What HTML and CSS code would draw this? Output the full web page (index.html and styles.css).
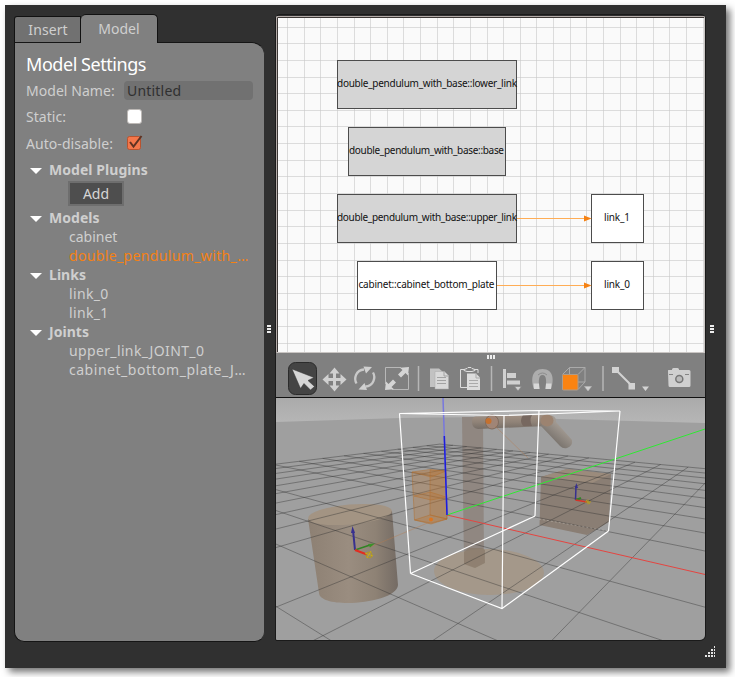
FILE: index.html
```
<!DOCTYPE html>
<html lang="en">
<head>
<meta charset="utf-8">
<title>Model Editor</title>
<link rel="stylesheet" href="styles.css">
</head>
<body>
<div class="window">
  <aside class="sidebar">
    <div class="tabs"><div class="tab tab-insert"><span>Insert</span></div><div class="tab tab-model"><span>Model</span></div></div>
    <div class="panel">
      <h1><span>Model Settings</span></h1>
      <div class="field"><label>Model Name:</label><div class="input">Untitled</div></div>
      <div class="field"><label>Static:</label><div class="check"></div></div>
      <div class="field"><label>Auto-disable:</label>
        <svg class="checked" width="18" height="16" viewBox="0 0 18 16"><rect x="1.5" y="1.5" width="13" height="13" rx="2" fill="#f4774b" stroke="#b9532f"/><path d="M4 7l3.5 4.5L15.500 1" fill="none" stroke="#5f3222" stroke-width="2"/></svg>
      </div>
      <div class="group plugins"><i></i><b>Model Plugins</b></div>
      <button class="add">Add</button>
      <div class="group"><i></i><b>Models</b></div>
      <div class="item short">cabinet</div>
      <div class="item selected">double_pendulum_with_…</div>
      <div class="group"><i></i><b>Links</b></div>
      <div class="item">link_0</div>
      <div class="item">link_1</div>
      <div class="group"><i></i><b>Joints</b></div>
      <div class="item">upper_link_JOINT_0</div>
      <div class="item long">cabinet_bottom_plate_J…</div>
    </div>
  </aside>
  <div class="splitter"><i></i><i></i><i></i></div>
  <main class="main">
    <svg class="diagram" width="430" height="337" viewBox="276 16 430 337">
      <rect x="276" y="16" width="430" height="337" fill="#fafafa"/>
      <g id="paper" fill="#c8c8c8" fill-opacity=".6"></g>
      <path d="M276.500 353V16.500H705" fill="none" stroke="#b3aba8"/>
      <path d="M277.500 353V17.500H705" fill="none" stroke="#3c3836"/>
      <path d="M704.500 17V353M277 352.500H705" fill="none" stroke="#c9c5c3"/>
      <path d="M705.500 17V353" stroke="#77726f"/>
      <g fill="#d5d5d5" stroke="#4c4c4c">
        <rect x="337.500" y="60.500" width="179" height="48"/>
        <rect x="348.500" y="127.500" width="157" height="48"/>
        <rect x="337.500" y="194.500" width="179" height="48"/>
      </g>
      <g fill="#fff" stroke="#4c4c4c">
        <rect x="357.500" y="261.500" width="139" height="48"/>
        <rect x="591.500" y="194.500" width="52" height="48"/>
        <rect x="591.500" y="261.500" width="52" height="48"/>
      </g>
      <path d="M517 218.500H585M497 285.500H585" stroke="#ffad55"/>
      <path d="M584 215.500l7.500 3-7.500 3zM584 282.500l7.500 3-7.500 3z" fill="#f58113"/>
      <g class="labels">
        <text x="337" y="87" textLength="180">double_pendulum_with_base::lower_link</text>
        <text x="349" y="154" textLength="155">double_pendulum_with_base::base</text>
        <text x="337" y="221" textLength="180">double_pendulum_with_base::upper_link</text>
        <text x="358.500" y="288" textLength="136">cabinet::cabinet_bottom_plate</text>
        <text x="604" y="221" textLength="26">link_1</text>
        <text x="604" y="288" textLength="26">link_0</text>
      </g>
    </svg>
    <div class="toolbar">
      <svg width="44" height="44" viewBox="0 0 44 44"><rect x="12.500" y="9.500" width="28" height="32" rx="7" fill="#444" stroke="#2b2b2b"/><path d="M16 16L38 24.500l-6 3 6.500 6-4 3.500-6.500-6.500-3.500 5z" fill="#d6d6d6" stroke="#333" stroke-width=".5"/></svg>
      <svg width="30" height="44" viewBox="44 0 30 44"><path d="M58.500 14.500l5 6h-3.500v4.500h4.500v-4l6 5.500-6 5.500v-4H60v4.500h3.500l-5 6-5-6H57v-4.500h-4.500v4l-6-5.500 6-5.500v4H57v-4.500h-3.500z" fill="#d0d0d0"/></svg>
      <svg width="31" height="44" viewBox="74 0 31 44"><g fill="none" stroke="#c9c9c9" stroke-width="2.300"><path d="M80.500 30.500c-3-5-.5-13.500 7.500-14"/><path d="M97 19.500c3 5 .5 13.500-7.500 14"/></g><path d="M87.500 13.500l8.500.500-6 6.500zM91 37l-8.500-.5 6-6.500z" fill="#d0d0d0"/></svg>
      <svg width="33" height="44" viewBox="105 0 33 44"><path d="M125 14.500H109.500V31M132.500 20V36.500H116" fill="none" stroke="#b8b8b8"/><path d="M133 14l-1 8.500-2.500-2.500-4.500 4.500-3-3 4.500-4.500-2.500-2.200zM109 37l1-8.500 2.500 2.500 4.500-4.500 3 3-4.500 4.500 2.500 2.200z" fill="#d5d5d5"/></svg>
      <svg width="12" height="44" viewBox="138 0 12 44"><path d="M142.500 13V38" stroke="#b6b6b6" stroke-width="1.500"/></svg>
      <svg width="30" height="44" viewBox="150 0 30 44"><path d="M154 15.500h9l4 3.500v15h-13z" fill="#c2c2c2"/><path d="M159 18.500h9.500l4 4V36H159z" fill="#d9d9d9" stroke="#aaa" stroke-width=".5"/><path d="M168 18.500v4.500h4.500M161 24.500h9M161 27.500h9M161 30.500h9" fill="none" stroke="#a3a3a3"/></svg>
      <svg width="31" height="44" viewBox="180 0 31 44"><path d="M191 34.500H184.500V16.500H202V20" fill="none" stroke="#ddd"/><path d="M188 17.500v-1l3-1 1-1h3l1 1 3 1v1l-3 1h-5z" fill="#808080" stroke="#e0e0e0"/><path d="M191 20.500h9l4 4V37h-13z" fill="#dcdcdc"/><path d="M200 20.500v4.500h4M193 27.500h9M193 30.500h9M193 33.500h9" fill="none" stroke="#aaa"/></svg>
      <svg width="10" height="44" viewBox="211 0 10 44"><path d="M215.500 13V38" stroke="#b6b6b6" stroke-width="1.500"/></svg>
      <svg width="31" height="44" viewBox="221 0 31 44"><path d="M227 16h3v19h-3zM231 20h9v5h-9zM231 27.500h13v4H231z" fill="#d0d0d0"/><path d="M238.500 33.500h7l-3.500 4.500z" fill="#d0d0d0" stroke="#808080" stroke-width=".6"/></svg>
      <svg width="30" height="44" viewBox="252 0 30 44"><path d="M258 36c-3-8-3-20 8.500-20S278 28 275 36h-5.500c1-6 1.500-14-3-14s-4 8-3 14z" fill="#adadad"/><path d="M257.500 30.500h5.500l.5 5.500H258zM270 30.500h5.500L275 36h-5.500z" fill="#d8d8d8"/><path d="M262 22q4.500-4 9 0" fill="none" stroke="#8c8c8c"/></svg>
      <svg width="40" height="44" viewBox="282 0 40 44"><path d="M286.500 21.500l7-7h15.500V29l-7 7.500M302 21.500l7-7M293.500 14.500V29H309M286.500 36.500l7-7.500" fill="none" stroke="#aaa"/><rect x="286.500" y="21.500" width="15.500" height="15.500" rx="1" fill="#fa8312" stroke="#ad9c8b"/><path d="M308.500 33.500h7l-3.500 4.500z" fill="#d0d0d0" stroke="#bbb" stroke-width=".5"/></svg>
      <svg width="10" height="44" viewBox="322 0 10 44"><path d="M327 13V38" stroke="#b6b6b6" stroke-width="1.500"/></svg>
      <svg width="42" height="44" viewBox="332 0 42 44"><path d="M340 17l16 16" stroke="#d3d3d3" stroke-width="2"/><path d="M336 14h7v6h-7zM352.500 30h6.500v6.500h-6.500zM366 33.500h7l-3.500 4.500z" fill="#d3d3d3"/></svg>
      <svg width="50" height="44" viewBox="374 0 50 44"><path d="M392 19v-1.500q0-.5.500-.5h3.500v-.5q0-1.500 1.500-1.500h4q1.500 0 1.500 1.500v.5h10q1.500 0 1.500 1.500v14q0 1.500-1.500 1.500h-19q-1.500 0-1.500-1.500z" fill="#d0d0d0"/><path d="M393 21.500h4M409 21.500h4" stroke="#858585"/><circle cx="403.300" cy="26" r="3.500" fill="#bbb" stroke="#777" stroke-width="1.500"/></svg>
      <div class="grip"><i></i><i></i><i></i></div>
    </div>
    <svg class="scene" width="430" height="243" viewBox="276 397 430 243">
      <defs>
        <linearGradient id="sky" x1="0" y1="0" x2="0" y2="1"><stop offset="0" stop-color="#aaa"/><stop offset="1" stop-color="#b6b6b6"/></linearGradient>
        <linearGradient id="drum"><stop offset="0" stop-color="#8d8073"/><stop offset=".45" stop-color="#9a8d80"/><stop offset=".75" stop-color="#8e8275"/><stop offset="1" stop-color="#746b64"/></linearGradient>
        <linearGradient id="arm" x1="0" y1="0" x2="0" y2="1"><stop offset="0" stop-color="#a19184"/><stop offset=".5" stop-color="#908378"/><stop offset="1" stop-color="#766e67"/></linearGradient>
        <linearGradient id="rod" gradientUnits="userSpaceOnUse" x1="561" y1="427" x2="551" y2="439"><stop offset="0" stop-color="#a19991"/><stop offset="1" stop-color="#7a746e"/></linearGradient>
      </defs>
      <rect x="276" y="397" width="430" height="243" fill="#9f9f9f"/>
      <path d="M276 397H706V423L560 419Q480 416 400 418L276 422z" fill="url(#sky)"/>
      <path d="M462 417H483L484 563 475 568 464 564z" fill="#8b7f77" fill-opacity=".75"/>
      <ellipse cx="489" cy="572" rx="55" ry="23" fill="#a59583" fill-opacity=".75" transform="rotate(1 489 572)"/>
      <path d="M464 552l5-4h13l3 2v13l-10 5-11-4z" fill="#887969" fill-opacity=".7"/>
      <path d="M541 477L567 469 611 474 609 522 587 535 539.500 525z" fill="#8a7e74"/>
      <path d="M541 477L567 469 611 474 592 483z" fill="#9b8b7c"/>
      <path d="M308 519L319 593C320 610 397 604 398 585L392 511z" fill="url(#drum)"/>
      <ellipse cx="350" cy="514.500" rx="42" ry="10" transform="rotate(-5 350 514.500)" fill="#a39483"/>
      <g id="floor" fill="none" stroke="#303030" stroke-opacity=".4"></g>
      <path d="M447 515L706 574.700" stroke="#e44541"/>
      <path d="M447 515L706 428.700" stroke="#2eea32"/>
      <path d="M539 519L608 531" stroke="#c4bdb6" stroke-opacity=".5" stroke-dasharray="2 2"/>
      <g fill="#b97431" fill-opacity=".3" stroke="#b46c29" stroke-opacity=".45">
        <path d="M412 472L430 469.500 446 471 447 519 431 523 414.500 520z"/>
        <path d="M430 470L446 471 447 519 430 515z"/>
        <path d="M414 496L430 492 446 497 431 500zM414.500 520L430 515 447 519 431 524zM412 472L431 477 446 471"/>
      </g>
      <circle cx="431" cy="519.500" r="2" fill="#dc741f"/>
      <path d="M443 398L447 515" stroke="#7878dd" stroke-width="1.500"/>
      <path d="M444.300 436L447 515" stroke="#1c1cdc" stroke-width="1.500"/>
      <path d="M477 416.500L545 415Q550 417 551 421T547 426L478 429Q472 428 472 422T477 416.500z" fill="url(#arm)"/>
      <path d="M547 415Q557 415 556 422L572 440Q573 446 567 448 563 449 560 446L541 426z" fill="url(#rod)"/>
      <ellipse cx="492" cy="422" rx="6.500" ry="7" fill="#a08576" stroke="#806b5d"/>
      <circle cx="488.500" cy="421" r="3" fill="#c5712f"/>
      <path d="M523 415h9q-3 5 0 11h-9q-4-5 0-11z" fill="#776860"/>
      <ellipse cx="547" cy="420.500" rx="6.500" ry="6" fill="#9c8370"/>
      <path d="M495 426L528 458M370 547L430 522" stroke="#b97b4b" stroke-opacity=".4"/>
      <g fill="none" stroke="#fff" stroke-width="1.200">
        <path d="M399.500 413.500L504 415.500 620 411 539 410.500zM410.500 573.500L502 608.500 608.500 531M410.500 573.500L535 516"/>
        <path d="M399.500 413.500L410.500 573.500M504 415.500L502 608.500M620 411L608.500 531M539 410.500L535 516"/>
      </g>
      <path d="M355 550L353 530" stroke="#37308f" stroke-width="2"/><path d="M352.500 526l2.500 7h-4z" fill="#37308f"/>
      <path d="M355 550L370 545" stroke="#318325" stroke-width="1.500"/><path d="M375 543.500l-5 4-2-3.500z" fill="#3c912a"/>
      <path d="M355 550L367 554.500" stroke="#e22c20" stroke-width="2"/><circle cx="369" cy="555" r="3" fill="none" stroke="#b3991e"/><path d="M365 553l8 3M371 551l-4 7" stroke="#c7ac17"/>
      <path d="M575.500 500L576 486" stroke="#37308f" stroke-width="1.500"/><path d="M576.300 483l1.700 5h-3z" fill="#37308f"/>
      <path d="M576 500L581 498" stroke="#318325" stroke-width="2"/><path d="M575.500 500L587 502" stroke="#d73227" stroke-width="1.500"/><path d="M585 502h6M588 499.500v5M586 500l4 4" stroke="#b49b20"/>
      <path d="M276 397.500H706" stroke="#111"/>
    </svg>
  </main>
  <div class="splitter right"><i></i><i></i><i></i></div>
  <svg class="sizegrip" width="11" height="12" viewBox="0 0 11 12" shape-rendering="crispEdges"><path d="M0 9h2v2H0zM3 9h2v2H3zM6 9h2v2H6zM9 9h1v2H9zM3 6h2v2H3zM6 6h2v2H6zM9 6h1v2H9zM6 3h2v2H6zM9 3h1v2H9zM9 0h1v2H9z" fill="#e4e4e4"/></svg>
</div>
<script src="app.js"></script>
</body>
</html>
```
FILE: styles.css
```
* { box-sizing: border-box; }
body { margin: 0; padding: 5px; height: 677px; background: #fff; overflow: hidden; font-family: "Noto Sans", sans-serif; font-size: 14px; color: #cfcfcf; }
.window { position: relative; display: flex; width: 721px; height: 663px; background: #303030; box-shadow: 4px 4px 7px rgba(0,0,0,.55); padding-top: 9px; padding-left: 9px; }
.sidebar { width: 251px; display: flex; flex-direction: column; height: 628px; }
.tabs { display: flex; align-items: flex-end; height: 29px; }
.tab { text-align: center; border: 1px solid #111; border-bottom: 0; }
.tab-insert { width: 67px; height: 27px; background: #717171; border-radius: 3px 0 0 0; line-height: 26px; padding-left: 1px; }
.tab-model { width: 77px; height: 29px; background: #808080; border-radius: 5px 5px 0 0; border-left: 0; line-height: 28px; position: relative; z-index: 1; }
.tab-insert span { letter-spacing: .1px; }
.panel { flex: 1; background: #808080; border: 1px solid #151515; border-right-color: #303030; border-radius: 0 13px 10px 10px; padding: 9px 11px; margin-top: -1px; }
h1 { margin: 0; font-size: 18px; font-weight: 400; color: #fff; line-height: 24px; height: 25px; letter-spacing: -.45px; white-space: nowrap; }
.field { display: flex; align-items: center; height: 26.500px; }
label { width: 98px; letter-spacing: .05px; white-space: nowrap; }
.input { width: 129px; height: 19px; background: #717171; border-radius: 4px; padding-left: 3px; line-height: 19px; color: #303030; letter-spacing: .2px; }
.check { width: 15px; height: 15px; margin-left: 3px; background: #fff; border: 1px solid #bdb9b6; border-radius: 3px; }
.checked { margin-left: 2px; }
.group { display: flex; align-items: center; height: 19px; padding-left: 4px; line-height: 19px; letter-spacing: .05px; }
.group i { width: 12px; height: 6px; background: #fff; clip-path: polygon(0 0,100% 0,50% 100%); margin: 4px 7px 0 0; }
.plugins { height: 25px; }
.add { display: block; width: 56px; height: 25px; margin: 0 0 2px 42px; padding: 0; font: inherit; color: #d6d6d6; background: #4e4e4e; border: 2px solid #6e6e6e; line-height: 21px; }
.plugins + .add { margin-top: -1px; }
.item { height: 19px; line-height: 19px; padding-left: 43px; white-space: nowrap; letter-spacing: .36px; }
.item.short { letter-spacing: 0; }
.item.long { letter-spacing: .52px; }
.selected { color: #f58113; }
.splitter { width: 10px; display: flex; flex-direction: column; gap: 1px; padding: 311px 0 0 2px; }
.splitter i { width: 4px; height: 2px; background: #eee; }
.main { width: 431px; height: 627px; border: 1px solid #1a1a1a; border-radius: 5px 5px 6px 2px; display: flex; flex-direction: column; padding-top: 1px; overflow: hidden; }
.main svg { display: block; flex: none; }
.splitter.right { padding-left: 4px; }
.labels { font: 10px "Noto Sans", sans-serif; fill: #111; }
.toolbar { display: flex; height: 44px; flex: none; background: #808080; width: 430px; position: relative; overflow: hidden; }
.grip { position: absolute; left: 211px; top: 2px; display: flex; gap: 1px; }
.grip i { width: 2px; height: 4px; background: #eee; }
.sizegrip { position: absolute; right: 10px; bottom: 10px; }
```
FILE: app.js
```
const NS = "http://www.w3.org/2000/svg";
function add(parent, tag, attrs) {
  const el = document.createElementNS(NS, tag);
  for (const k in attrs) el.setAttribute(k, attrs[k]);
  parent.appendChild(el);
}

// Paper grid of the schematic view
const paper = document.getElementById("paper");
for (let i = 0; i < 26; i++) add(paper, "rect", { x: Math.floor(287.5 + i * 16.63), y: 17, width: 1, height: 336 });
for (let i = 0; i < 20; i++) add(paper, "rect", { x: 277, y: Math.floor(27.2 + i * 16.63), width: 428, height: 1 });

// Ground plane grid in perspective
const floor = document.getElementById("floor");
function project(u, v) {
  const a = -0.067 * u, b = 0.095 * v, w = 1 + a + b;
  return ((447 - 59 * a + 784 * b) / w).toFixed(1) + " " + ((515 + 398 * a + 402 * b) / w).toFixed(1);
}
for (let u = -10; u <= 4; u++) if (u) add(floor, "path", { d: "M" + project(u, -6) + "L" + project(u, 10) });
for (let v = -4; v <= 10; v++) if (v) add(floor, "path", { d: "M" + project(-10, v) + "L" + project(7, v) });
```
